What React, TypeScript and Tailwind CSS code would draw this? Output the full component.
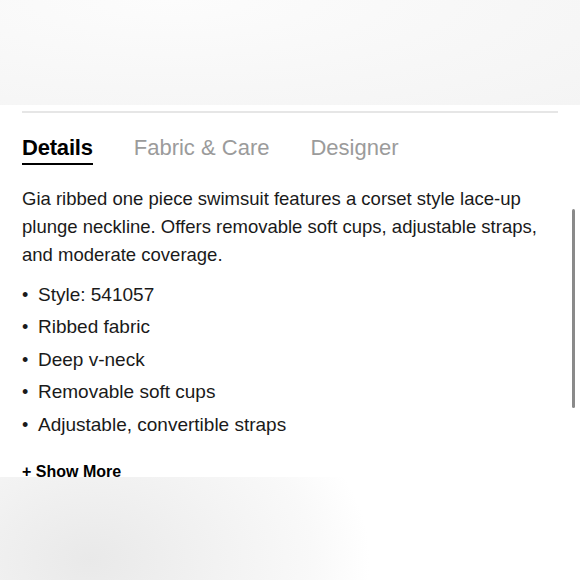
const bullets = [
  'Style: 541057',
  'Ribbed fabric',
  'Deep v-neck',
  'Removable soft cups',
  'Adjustable, convertible straps',
];

export default function App() {
  return (
    <div className="relative w-[580px] h-[580px] overflow-hidden bg-white font-['Liberation_Sans',Arial,sans-serif] text-[#1a1a1a]">
      <div className="h-[105px] bg-[radial-gradient(ellipse_at_30%_0%,#fcfcfc_0%,#f7f7f7_60%,#f4f4f4_100%)]" />

      <div className="px-[22px]">
        <div className="mt-[6px] h-[2px] bg-[#e6e6e6]" />

        <div className="mt-[21px] flex gap-[41px] text-[22px] leading-[28px]">
          <div className="border-b-2 border-black pb-[1px] font-bold text-black tracking-[-0.2px]">Details</div>
          <div className="text-[#9b9b9b]">Fabric &amp; Care</div>
          <div className="text-[#9b9b9b]">Designer</div>
        </div>

        <p className="mt-[20px] text-[18.5px] leading-[28px] pr-[10px]">
          Gia ribbed one piece swimsuit features a corset style lace-up plunge neckline. Offers removable soft cups, adjustable straps, and moderate coverage.
        </p>

        <ul className="mt-[10px] text-[19px] leading-[32.4px]">
          {bullets.map((b) => (
            <li key={b} className="flex">
              <span className="w-[16px] text-[18px]">•</span>
              <span>{b}</span>
            </li>
          ))}
        </ul>

        <div className="mt-[21px] text-[16px] leading-[20px] font-bold text-black">+ Show More</div>
      </div>

      <div className="absolute right-[5px] top-[209px] h-[199px] w-[3px] rounded-full bg-[#8a8a8a]" />

      <div className="absolute left-0 right-0 top-[477px] bottom-0 bg-[radial-gradient(ellipse_280px_200px_at_90px_83px,#e9e9e9_0%,#f2f2f2_45%,#f9f9f9_80%,#ffffff_100%),radial-gradient(ellipse_120px_60px_at_100%_0%,#f6f6f6_0%,#ffffff_100%)]" />
    </div>
  );
}
